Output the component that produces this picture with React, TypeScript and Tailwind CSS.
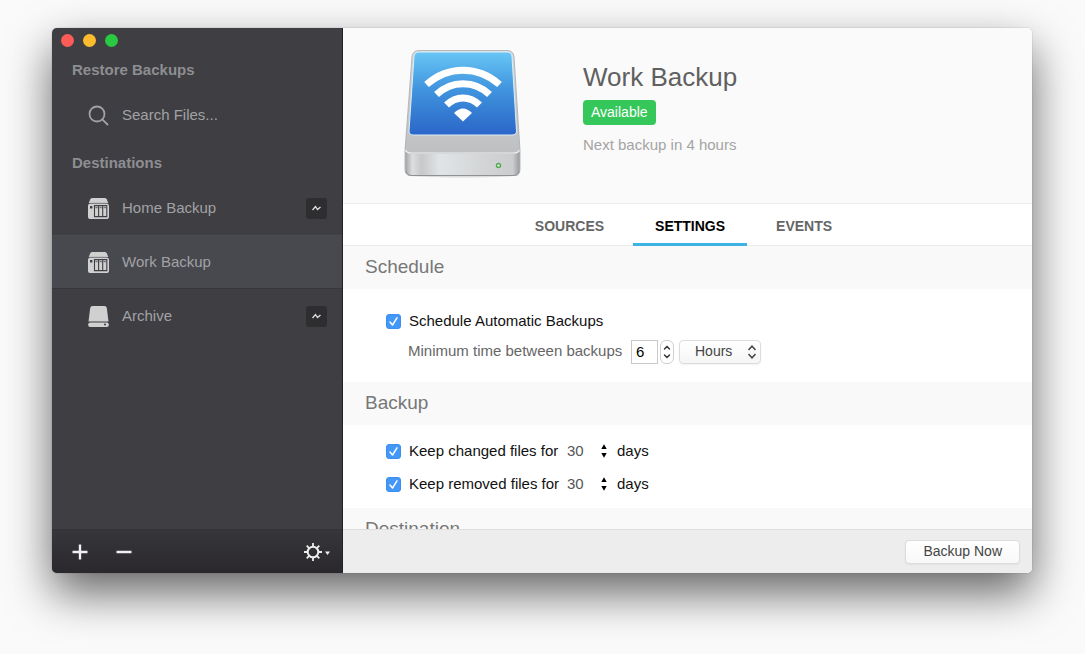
import { useState, type ReactNode } from "react";
import clsx from "clsx";

type Destination = { name: string; kind: "nas" | "drive"; badge: boolean };

const destinations: Destination[] = [
  { name: "Home Backup", kind: "nas", badge: true },
  { name: "Work Backup", kind: "nas", badge: false },
  { name: "Archive", kind: "drive", badge: true },
];

const tabs = ["SOURCES", "SETTINGS", "EVENTS"];

function NasIcon() {
  return (
    <svg width="21" height="21" viewBox="0 0 21 21" className="shrink-0">
      <path d="M4.500 0h12q1.600 0 2.200 1.200L20.300 5H.7L2.300 1.200Q2.900 0 4.500 0z" fill="#d0d0d1" />
      <rect y="5.500" width="21" height="15.500" rx="2.600" fill="#d0d0d1" />
      <path d="M1.500 5.300h18" stroke="#77777b" strokeWidth=".7" />
      <rect x="2" y="8" width="2.400" height="2.400" rx=".5" fill="#3e3e43" />
      <path d="M6.500 7.600h12.300v11H6.500zM10.600 7.600v11M14.700 7.600v11" fill="none" stroke="#3e3e43" strokeWidth="1.100" />
      <path d="M7.500 9.700h2.200M11.600 9.700h2.200M15.700 9.700h2.200" stroke="#3e3e43" strokeWidth=".8" />
    </svg>
  );
}

function DriveIcon() {
  return (
    <svg width="21" height="21" viewBox="0 0 21 21" className="shrink-0">
      <path d="M4.500 0h12q2 0 2.300 2L20.500 15.500H.5L2.200 2Q2.500 0 4.500 0z" fill="#d0d0d1" />
      <rect x=".3" y="16.500" width="20.400" height="4.500" rx="1.800" fill="#d0d0d1" />
      <circle cx="17" cy="18.600" r="1" fill="#3e3e43" />
    </svg>
  );
}

function DiskArtwork() {
  return (
    <svg width="120" height="132" viewBox="0 0 120 132" className="shrink-0">
      <defs>
        <linearGradient id="screen" x1="0" y1="0" x2="0" y2="1">
          <stop offset="0" stopColor="#68c6f5" />
          <stop offset=".45" stopColor="#4094de" />
          <stop offset="1" stopColor="#2a66c8" />
        </linearGradient>
        <linearGradient id="top" x1="0" y1="0" x2="0" y2="1">
          <stop offset="0" stopColor="#d5d8db" />
          <stop offset="1" stopColor="#b9babb" />
        </linearGradient>
        <linearGradient id="front" x1="0" y1="0" x2="1" y2="0">
          <stop offset="0" stopColor="#a4a5a7" />
          <stop offset=".06" stopColor="#dcdee0" />
          <stop offset=".14" stopColor="#c6c8ca" />
          <stop offset=".3" stopColor="#e1e4e6" />
          <stop offset=".7" stopColor="#d2d4d6" />
          <stop offset=".94" stopColor="#cccdcf" />
          <stop offset="1" stopColor="#9b9c9e" />
        </linearGradient>
      </defs>
      <ellipse cx="60" cy="127" rx="56" ry="2.500" fill="#000" opacity=".12" />
      <path d="M16 2.500h88q6 0 7 6l6 94v19q0 6-6 6H8q-6 0-6-6v-19L9 8.500q1-6 7-6z" fill="url(#top)" stroke="#a8abad" strokeWidth=".8" />
      <path d="M2.500 102q1 4 6 4h102q5 0 6-4v19q0 6-6 6h-102q-6 0-6-6z" fill="url(#front)" />
      <path d="M2.500 102q1 3 6 3h102q5 0 6-3" fill="none" stroke="#eeeff0" strokeWidth="1.200" />
      <path d="M3 123q1 4.500 6 4.500h101q5 0 6-4.500" fill="none" stroke="#909193" strokeWidth="1" />
      <path d="M16 4h88q4.500 0 5 4.500l4.500 74.500q0 4-4.500 4H10.500q-4.500 0-4.500-4L11 8.500q.5-4.500 5-4.500z" fill="url(#screen)" stroke="#dbeef8" strokeWidth="1" />
      <g fill="none" stroke="#fff" strokeWidth="7">
        <path d="M23.500 36.500C45 17.500 75 17.500 96.500 36.500" />
        <path d="M33.500 46.500C48.500 32 71.500 32 86.500 46.500" />
        <path d="M43.500 57C53 47.500 67 47.500 76.500 57" />
      </g>
      <path d="M51 65q9-9 18 0L60 73.500z" fill="#fff" />
      <circle cx="95.500" cy="117.500" r="2" fill="#d5f0d2" stroke="#55a851" strokeWidth="1.400" />
    </svg>
  );
}

function Stepper({ onStep, label, boxed }: { onStep: (n: number) => void; label: string; boxed?: boolean }) {
  return (
    <span
      className={clsx(
        "flex flex-col items-center justify-center text-black",
        boxed ? "h-6 w-3.5 gap-1 rounded-md border border-[#cfcfcf] bg-white" : "h-5 w-3 gap-1"
      )}
    >
      {[1, -1].map((n) => (
        <button key={n} type="button" aria-label={`${n > 0 ? "Increase" : "Decrease"} ${label}`} onClick={() => onStep(n)}>
          <svg width="8" height="5" viewBox="0 0 8 5" className={clsx("block", n < 0 && "rotate-180")}>
            {boxed ? (
              <path d="M1.500 4L4 1.400 6.500 4" fill="none" stroke="#333" strokeWidth="1.400" strokeLinecap="round" />
            ) : (
              <path d="M1.300 5L4 .3 6.700 5z" fill="currentColor" />
            )}
          </svg>
        </button>
      ))}
    </span>
  );
}

function Checkbox({ id, children }: { id: string; children: ReactNode }) {
  const [checked, setChecked] = useState(true);
  return (
    <label htmlFor={id} className="flex items-center gap-2 whitespace-nowrap text-[#111]">
      <span className="relative size-[15px] shrink-0">
        <input
          id={id}
          type="checkbox"
          checked={checked}
          onChange={(e) => setChecked(e.target.checked)}
          className="block size-full appearance-none rounded-[3px] border border-gray-400 checked:border-[#3b8ff0] checked:bg-[#4297f7]"
        />
        {checked && (
          <svg viewBox="0 0 15 15" className="pointer-events-none absolute inset-0">
            <path d="M4 8l2.500 3L11 3.800" fill="none" stroke="#fff" strokeWidth="1.500" strokeLinecap="round" strokeLinejoin="round" />
          </svg>
        )}
      </span>
      {children}
    </label>
  );
}

function KeepRow({ id, label }: { id: string; label: string }) {
  const [days, setDays] = useState(30);
  return (
    <div className="flex h-[33px] items-center">
      <div className="w-[181px]">
        <Checkbox id={id}>{label}</Checkbox>
      </div>
      <input
        aria-label={`${label}, days`}
        value={days}
        onChange={(e) => setDays(Number(e.target.value) || 0)}
        className="w-6 bg-transparent text-[#555] outline-none"
      />
      <span className="mx-[7px] flex">
        <Stepper label="days" onStep={(n) => setDays(days + n)} />
      </span>
      <span className="text-[#111]">days</span>
    </div>
  );
}

function SectionTitle({ children }: { children: ReactNode }) {
  return <h2 className="flex h-[43px] items-center bg-[#f9f9f9] px-[22px] text-[19px] text-[#777]">{children}</h2>;
}

function Sidebar() {
  const [selected, setSelected] = useState("Work Backup");
  return (
    <aside className="flex w-[291px] shrink-0 flex-col border-r border-[#222225] bg-[#3e3e43] text-[#a2a2a5]">
      <div className="flex h-6 items-center gap-[9px] px-[9px]">
        <button aria-label="Close" className="size-[13px] rounded-full bg-[#fc5b57]" />
        <button aria-label="Minimize" className="size-[13px] rounded-full bg-[#fdbc2e]" />
        <button aria-label="Zoom" className="size-[13px] rounded-full bg-[#29c941]" />
      </div>
      <h2 className="px-5 pt-1.5 text-[15px] leading-6 font-bold text-[#8e8e91]">Restore Backups</h2>
      <label htmlFor="search" className="flex h-[67px] items-center gap-[13px] pl-9">
        <svg width="21" height="21" viewBox="0 0 21 21" fill="none" stroke="#a2a2a5" strokeWidth="1.800">
          <circle cx="9" cy="9" r="7.500" />
          <path d="M14.300 14.300l5.200 5.200" strokeLinecap="round" />
        </svg>
        <input
          id="search"
          type="search"
          placeholder="Search Files..."
          className="min-w-0 flex-1 bg-transparent text-[15px] outline-none placeholder:text-[#a2a2a5]"
        />
      </label>
      <h2 className="px-5 pt-0.5 text-[15px] leading-6 font-bold text-[#8e8e91]">Destinations</h2>
      <ul className="pt-1.5">
        {destinations.map((d) => (
          <li
            key={d.name}
            className={clsx(
              "flex h-[54px] items-center border-y pr-[15px] pl-9",
              selected === d.name ? "border-t-[#4b4b52] border-b-[#37373b] bg-[#48484f]" : "border-transparent"
            )}
          >
            <button onClick={() => setSelected(d.name)} className="flex h-full flex-1 items-center gap-[13px] text-[15px]">
              {d.kind === "nas" ? <NasIcon /> : <DriveIcon />}
              {d.name}
            </button>
            {d.badge && (
              <button aria-label={`${d.name} activity`} className="flex size-[21px] items-center justify-center rounded-[3px] bg-[#2e2e31]">
                <svg width="9" height="7" viewBox="0 0 9 7">
                  <path d="M.5 5L3.500 1.500 5.500 4.500 8.500 2" fill="none" stroke="#ddd" strokeWidth="1.300" />
                </svg>
              </button>
            )}
          </li>
        ))}
      </ul>
      <div className="mt-auto flex h-11 items-center border-t border-[#343438] bg-linear-to-b from-[#37363b] to-[#2a282c] pr-3 pl-5">
        <button aria-label="Add destination" className="mr-7">
          <svg width="16" height="16" viewBox="0 0 16 16" className="block">
            <path d="M8 .5v15M.5 8h15" stroke="#f0f0f0" strokeWidth="2.400" />
          </svg>
        </button>
        <button aria-label="Remove destination">
          <svg width="16" height="16" viewBox="0 0 16 16" className="block">
            <path d="M.5 8h15" stroke="#f0f0f0" strokeWidth="2.400" />
          </svg>
        </button>
        <button aria-label="Options" className="ml-auto">
          <svg width="26" height="18" viewBox="0 0 26 18" className="block">
            <g fill="none" stroke="#eee" strokeWidth="2">
              <circle cx="9" cy="9" r="5.300" />
              <path
                d="M9 0v3.500M9 14.500V18M0 9h3.500M14.500 9H18M2.700 2.700l2.400 2.400M12.900 12.900l2.400 2.400M2.700 15.300l2.400-2.400M12.900 5.100l2.400-2.400"
                strokeWidth="1.800"
              />
            </g>
            <path d="M21 8.500h5L23.500 12z" fill="#eee" />
          </svg>
        </button>
      </div>
    </aside>
  );
}

export default function App() {
  const [activeTab, setActiveTab] = useState("SETTINGS");
  const [interval, setInterval] = useState(6);

  return (
    <div className="flex h-screen bg-[#fafafa] pt-7 pr-[53px] pb-[81px] pl-[52px] font-['Liberation_Sans',Arial,sans-serif] text-[15px]">
      <div className="flex flex-1 overflow-hidden rounded-[5px] shadow-[0_20px_46px_rgba(0,0,0,0.6),0_0_1px_rgba(0,0,0,0.5)]">
        <Sidebar />
        <main className="flex min-w-0 flex-1 flex-col bg-white">
          <header className="flex h-44 shrink-0 border-b border-[#eee] bg-[#fafafa] pt-5 pl-[60px]">
            <DiskArtwork />
            <div className="flex flex-col items-start pt-[13px] pl-[60px]">
              <h1 className="text-[26px] leading-8 text-[#606060]">Work Backup</h1>
              <span className="mt-[7px] rounded-[4px] bg-[#35c759] px-2 text-sm leading-[25px] text-white">Available</span>
              <p className="mt-2.5 text-[15px] leading-5 text-[#a4a4a4]">Next backup in 4 hours</p>
            </div>
          </header>
          <nav role="tablist" className="flex h-[42px] shrink-0 justify-center border-b border-[#ececec] pr-2">
            {tabs.map((tab) => (
              <button
                key={tab}
                role="tab"
                aria-selected={tab === activeTab}
                onClick={() => setActiveTab(tab)}
                className={clsx(
                  "-mb-px border-b-[3px] px-[22px] pt-1 text-sm font-bold first:pr-[29px] last:pl-[29px]",
                  tab === activeTab ? "border-[#3eb2e3] text-black" : "border-transparent text-[#666]"
                )}
              >
                {tab}
              </button>
            ))}
          </nav>
          <div className="min-h-0 flex-1 overflow-y-auto [scrollbar-width:none]">
            <SectionTitle>Schedule</SectionTitle>
            <div className="flex flex-col items-start px-[43px] pt-[21px] pb-[18px]">
              <Checkbox id="auto">Schedule Automatic Backups</Checkbox>
              <div className="mt-[7px] flex items-center pl-[22px]">
                <label htmlFor="interval" className="w-[223px] text-[#666]">
                  Minimum time between backups
                </label>
                <input
                  id="interval"
                  value={interval}
                  onChange={(e) => setInterval(Number(e.target.value) || 0)}
                  className="mr-0.5 h-6 w-[27px] border border-[#c8c8c8] px-1 text-black outline-none"
                />
                <Stepper boxed label="interval" onStep={(n) => setInterval(interval + n)} />
                <span className="relative ml-[5px]">
                  <select
                    aria-label="Interval unit"
                    className="block h-6 w-[82px] appearance-none rounded-[4px] border border-[#dcdcdc] bg-linear-to-b from-white to-[#f6f6f6] pl-[15px] text-[14px] text-[#444] shadow-xs"
                  >
                    <option>Hours</option>
                    <option>Days</option>
                  </select>
                  <svg width="10" height="14" viewBox="0 0 10 14" className="pointer-events-none absolute top-[5px] right-1">
                    <path d="M1.500 5L5 1.200 8.500 5M1.500 9L5 12.800 8.500 9" fill="none" stroke="#444" strokeWidth="1.500" />
                  </svg>
                </span>
              </div>
            </div>
            <SectionTitle>Backup</SectionTitle>
            <div className="px-[43px] pt-2.5 pb-[7px]">
              <KeepRow id="changed" label="Keep changed files for" />
              <KeepRow id="removed" label="Keep removed files for" />
            </div>
            <SectionTitle>Destination</SectionTitle>
          </div>
          <footer className="flex h-11 shrink-0 items-center justify-end border-t border-[#dedede] bg-[#ededed] pr-3">
            <button className="h-6 rounded-[4px] border border-[#dcdcdc] bg-linear-to-b from-white to-[#f8f8f8] px-[17px] text-[14px] text-[#444] shadow-xs">
              Backup Now
            </button>
          </footer>
        </main>
      </div>
    </div>
  );
}
